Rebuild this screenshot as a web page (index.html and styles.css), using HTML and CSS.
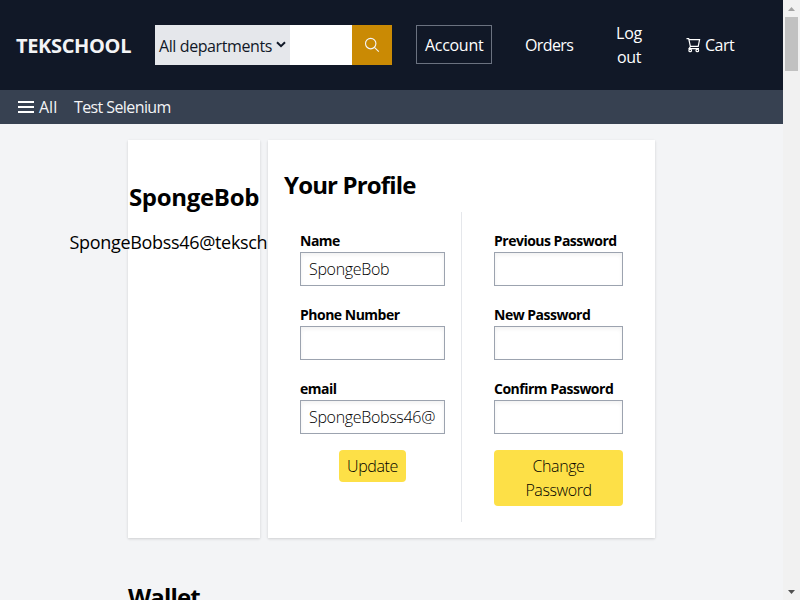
FILE: index.html
```html
<!DOCTYPE html>
<html lang="en">
<head>
<meta charset="utf-8">
<title>TEKSCHOOL</title>
<link rel="stylesheet" href="styles.css">
</head>
<body>
<div class="viewport">
  <div class="page">
    <header class="top">
      <div class="logo">TEKSCHOOL</div>
      <div class="search">
        <div class="dept"><span>All departments</span><svg width="10" height="7" viewBox="0 0 10 7"><path d="M1 1.2 5 5.2 9 1.2" fill="none" stroke="#111827" stroke-width="2"/></svg></div>
        <input class="query" type="text">
        <button class="go"><svg width="16" height="16" viewBox="0 0 16 16" fill="none" stroke="#f3f4f6" stroke-width="1.15"><circle cx="6.7" cy="6.6" r="5.2"/><path d="M10.4 10.3 14.8 14.6"/></svg></button>
      </div>
      <nav class="links">
        <a class="account">Account</a>
        <a class="orders">Orders</a>
        <a class="logout">Log<br>out</a>
        <a class="cart"><svg width="15" height="16" viewBox="0 0 15 16" fill="none" stroke="#fff" stroke-width="1.2"><path d="M.5 1.6H2.7L4.4 9.6 3 11.7H13M3 2.6H13.6L12.2 9.4H4.4"/><circle cx="4.2" cy="13.4" r="1.3"/><circle cx="11.3" cy="13.4" r="1.3"/></svg><span>Cart</span></a>
      </nav>
    </header>
    <div class="subnav">
      <svg width="16" height="14" viewBox="0 0 16 14" fill="#fff"><path d="M0 1h16v2H0zM0 6h16v2H0zM0 11h16v2H0z"/></svg>
      <span class="all">All</span>
      <span class="test">Test Selenium</span>
    </div>
    <main class="content">
      <div class="cards">
        <section class="card user">
          <h1 class="user-name">SpongeBob</h1>
          <div class="user-mail"><span>SpongeBobss46@teksch</span></div>
        </section>
        <section class="card profile">
          <h1 class="profile-title">Your Profile</h1>
          <div class="forms">
            <form class="col info">
              <label>Name</label><input type="text" value="SpongeBob">
              <label class="l-phone">Phone Number</label><input type="text">
              <label>email</label><input type="text" value="SpongeBobss46@">
              <button class="btn" type="button">Update</button>
            </form>
            <form class="col pass">
              <label>Previous Password</label><input type="password">
              <label>New Password</label><input type="password">
              <label>Confirm Password</label><input type="password">
              <button class="btn wide" type="button">Change Password</button>
            </form>
          </div>
        </section>
      </div>
      <h1 class="wallet">Wallet</h1>
    </main>
  </div>
  <div class="scrollbar">
    <svg width="7" height="4" viewBox="0 0 7 4"><path d="M0 4 3.5 0 7 4z" fill="#a3a3a3"/></svg>
    <div class="thumb"></div>
    <svg class="down" width="7" height="4" viewBox="0 0 7 4"><path d="M0 0 3.5 4 7 0z" fill="#505050"/></svg>
  </div>
</div>
</body>
</html>
```

FILE: styles.css
```css
* { box-sizing: border-box; }
html, body { margin: 0; height: 600px; overflow: hidden; }
body { font: 16px/24px "Open Sans", "Noto Sans", sans-serif; color: #000; }
h1 { margin: 0; font-weight: 700; font-size: 24px; line-height: 32px; white-space: nowrap; }
input, button { font: inherit; margin: 0; color: #000; }
svg { display: block; flex: none; }
.viewport { display: flex; height: 600px; }
.page { width: 783px; height: 600px; overflow: hidden; background: #f3f4f6; }
.top { height: 90px; display: flex; align-items: center; background: #111827; color: #fff; padding-left: 16px; }
.logo { width: 139px; font-size: 20px; font-weight: 700; letter-spacing: -0.35px; color: #f3f4f6; padding-top: 1px; }
.search { display: flex; width: 237px; height: 40px; }
.dept { width: 135px; display: flex; align-items: center; gap: 4px; padding: 2px 4px 0; background: #e5e7eb; color: #111827; white-space: nowrap; }
.dept span { width: 113px; letter-spacing: -0.4px; font-weight: 370; }
.dept svg { margin-top: -3px; }
.query { width: 62px; border: 0; background: #fff; }
.go { width: 40px; border: 0; padding: 0; background: #ca8a04; display: grid; place-items: center; }
.links { display: flex; align-items: center; height: 48px; letter-spacing: -0.3px; }
.account { width: 76px; height: 39px; margin: -1px 0 0 24px; border: 1px solid #6b7280; padding: 7px 8px; white-space: nowrap; }
.orders { margin-left: 33px; width: 50px; letter-spacing: -0.6px; }
.logout { margin-left: 38px; width: 32px; text-align: center; }
.cart { margin-left: 41px; display: flex; align-items: center; gap: 4px; letter-spacing: -0.5px; }
.subnav { height: 34px; display: flex; align-items: center; padding-left: 18px; background: #374151; color: #f3f4f6; letter-spacing: -0.6px; }
.all { margin-left: 5px; width: 35px; letter-spacing: 0; }
.test { margin-top: -1px; }
.content { padding: 16px 128px 0; }
.cards { display: flex; gap: 8px; }
.card { height: 398px; background: #fff; box-shadow: 0 1px 3px rgba(0,0,0,.1), 0 1px 2px rgba(0,0,0,.06); }
.user { width: 132px; padding-top: 41px; display: flex; flex-direction: column; align-items: center; }
.user-name { letter-spacing: -0.3px; }
.user-mail { margin-top: 15px; width: 249px; flex: none; font-size: 18px; line-height: 28px; font-weight: 450; letter-spacing: -0.32px; white-space: nowrap; }
.profile { width: 387px; padding: 29px 16px 16px; }
.profile-title { letter-spacing: -0.85px; }
.forms { display: flex; margin-top: 11px; height: 310px; }
.col { display: flex; flex-direction: column; padding: 16px; }
.info { width: 178px; border-right: 1px solid #e5e7eb; }
.pass { width: 177px; padding-left: 32px; }
label { height: 24px; padding-top: 1px; font-size: 14px; font-weight: 700; white-space: nowrap; letter-spacing: -0.5px; }
.col input { width: 100%; height: 34px; margin-bottom: 16px; padding: 0 8px; border: 1px solid #9ca3af; border-radius: 0; box-shadow: inset 0 2px 4px rgba(0,0,0,.06); font-weight: 350; letter-spacing: -0.32px; outline: 0; }
.btn { align-self: center; width: 67px; border: 0; border-radius: 4px; padding: 4px 8px; background: #fde047; font-weight: 350; letter-spacing: -0.4px; }
.btn.wide { width: 129px; }
.wallet { margin-top: 43px; letter-spacing: -0.85px; }
.scrollbar { width: 17px; height: 600px; padding: 7px 0 6px; background: #f1f1f1; display: flex; flex-direction: column; align-items: center; }
.thumb { width: 13px; height: 54px; margin-top: 6px; background: #c1c1c1; }
.down { margin-top: auto; }
```
